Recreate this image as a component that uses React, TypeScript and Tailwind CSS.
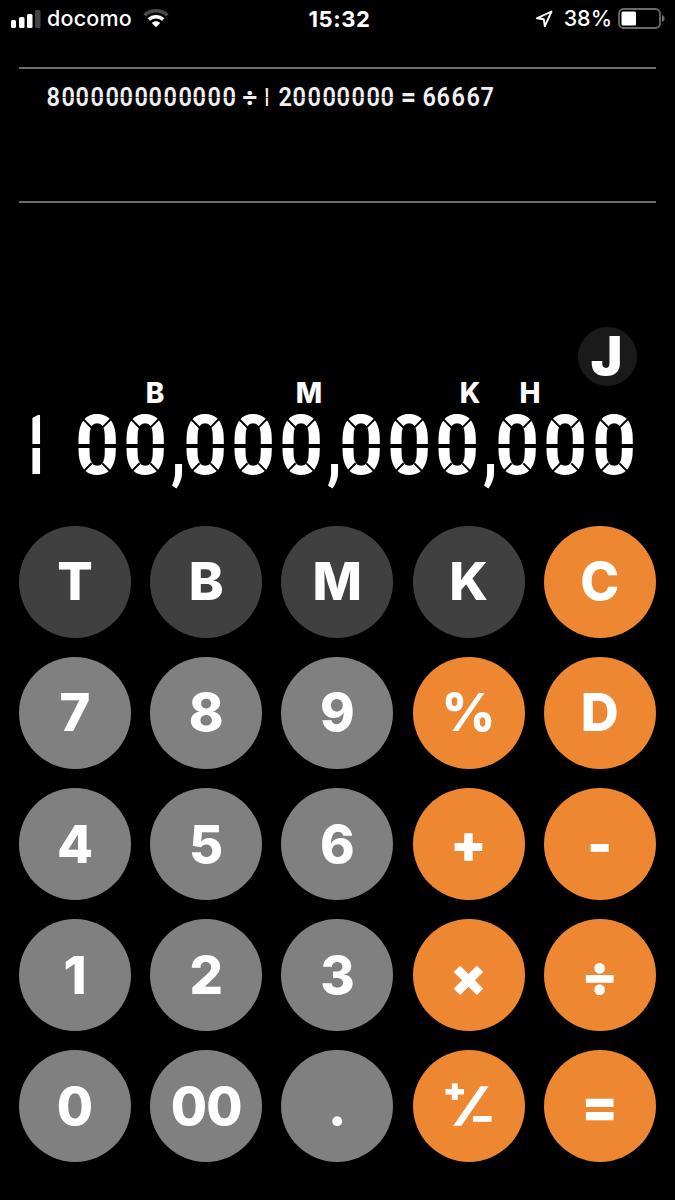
import React from 'react';
import clsx from 'clsx';

type Tone = 'dark' | 'gray' | 'orange';

interface Key {
  label: string;
  tone: Tone;
}

const KEYS: Key[] = [
  { label: 'T', tone: 'dark' },
  { label: 'B', tone: 'dark' },
  { label: 'M', tone: 'dark' },
  { label: 'K', tone: 'dark' },
  { label: 'C', tone: 'orange' },
  { label: '7', tone: 'gray' },
  { label: '8', tone: 'gray' },
  { label: '9', tone: 'gray' },
  { label: '%', tone: 'orange' },
  { label: 'D', tone: 'orange' },
  { label: '4', tone: 'gray' },
  { label: '5', tone: 'gray' },
  { label: '6', tone: 'gray' },
  { label: '+', tone: 'orange' },
  { label: '-', tone: 'orange' },
  { label: '1', tone: 'gray' },
  { label: '2', tone: 'gray' },
  { label: '3', tone: 'gray' },
  { label: '×', tone: 'orange' },
  { label: '÷', tone: 'orange' },
  { label: '0', tone: 'gray' },
  { label: '00', tone: 'gray' },
  { label: '.', tone: 'gray' },
  { label: '⁺⁄₋', tone: 'orange' },
  { label: '=', tone: 'orange' },
];

const TONES: Record<Tone, string> = {
  dark: 'bg-[#404040]',
  gray: 'bg-[#808080]',
  orange: 'bg-[#ee8732]',
};

const StatusBar: React.FC = () => (
  <header className="grid h-[37px] grid-cols-3 items-center pl-[11px] pr-[10px] text-[22px] font-medium leading-none">
    <div className="flex items-center">
      <svg width="30" height="18" viewBox="0 0 30 18" fill="#fff">
        <rect x="0" y="10" width="5" height="8" rx="1.5" />
        <rect x="8" y="7" width="5.5" height="11" rx="1.5" />
        <rect x="16" y="4" width="5.5" height="14" rx="1.5" />
        <rect x="24" y="0" width="5.5" height="18" rx="1.5" fill="#444" />
      </svg>
      <span className="ml-[6px] text-[21.5px] tracking-[0.2px]">docomo</span>
      <svg className="ml-[11px]" width="26" height="19" viewBox="0 0 26 19" fill="none" strokeWidth="3.4">
        <path d="M1.5 6.2C8 .3 18 .3 24.5 6.2" stroke="#4a4a4a" />
        <path d="M5.7 10.6C10 6.7 16 6.7 20.3 10.6" stroke="#fff" />
        <path d="M8.8 14C11.3 11.8 14.7 11.8 17.2 14L13 18.2Z" fill="#fff" />
      </svg>
    </div>
    <div className="pl-[3px] text-center font-bold tracking-[0.6px]">15:32</div>
    <div className="flex items-center justify-end">
      <svg width="18" height="18" viewBox="0 0 18 18" fill="none" stroke="#fff" strokeWidth="1.9" strokeLinejoin="round">
        <path d="M16.5 1.5L1.8 8.3L8.8 9.3L9.8 16.3Z" />
      </svg>
      <span className="ml-[11px] text-[21.5px]">38%</span>
      <svg className="ml-[6px]" width="47" height="21" viewBox="0 0 47 21">
        <rect x="1" y="1" width="41" height="19" rx="4.5" fill="none" stroke="#6b6b6b" strokeWidth="1.8" />
        <rect x="3.5" y="3.5" width="14.5" height="14" rx="1.5" fill="#fff" />
        <path d="M44 7C47.5 8 47.5 13 44 14Z" fill="#6b6b6b" />
      </svg>
    </div>
  </header>
);

interface LcdProps {
  large?: boolean;
}

// One LCD cell. Everything is in em so that both line sizes share it.
const LcdChar: React.FC<LcdProps & { char: string }> = ({ char, large }) => {
  if (char === ',') {
    return (
      <span className="w-[0.145em] text-center">
        <span className="-ml-[0.01em] inline-block scale-x-[0.7]">,</span>
      </span>
    );
  }
  if (!/\d/.test(char)) {
    return <span className="w-[1.05em] text-center font-black">{char}</span>;
  }
  const gap = <span className={clsx('absolute left-0 top-[0.34em] h-[0.048em] w-full', large ? 'bg-black' : 'bg-black/60')} />;
  if (char === '1') {
    return (
      <span className="relative w-[0.572em]">
        <span className="-ml-[0.085em] inline-block origin-left scale-x-[0.7] [clip-path:inset(0_0_0_0.262em)]">1</span>
        {gap}
      </span>
    );
  }
  return (
    <span className="relative w-[0.572em] text-center">
      <span className="inline-block scale-x-[0.92]">{char}</span>
      {char === '0' && gap}
      {/* corner gaps only show at the large size */}
      {char === '0' && large && (
        <>
          <span className="absolute left-[0.06em] top-[0.075em] h-[0.024em] w-[0.19em] rotate-45 bg-black" />
          <span className="absolute right-[0.06em] top-[0.075em] h-[0.024em] w-[0.19em] -rotate-45 bg-black" />
          <span className="absolute bottom-[0.075em] left-[0.06em] h-[0.024em] w-[0.19em] -rotate-45 bg-black" />
          <span className="absolute bottom-[0.075em] right-[0.06em] h-[0.024em] w-[0.19em] rotate-45 bg-black" />
        </>
      )}
    </span>
  );
};

const LcdText: React.FC<LcdProps & { text: string; className: string }> = ({ text, large, className }) => (
  <div className={clsx("flex font-['Roboto'] leading-[0.726em]", className)}>
    {text.split('').map((char, i) => (
      <LcdChar key={i} char={char} large={large} />
    ))}
  </div>
);

const Display: React.FC<{ value: string }> = ({ value }) => (
  <section className="h-[322.5px] pt-[124px]">
    <div className="flex justify-end pr-[38px]">
      <button className="flex size-[59px] items-center justify-center rounded-full bg-[#1a1a1a] pr-[2px] text-[53px] font-black leading-none">
        J
      </button>
    </div>
    <div className="flex h-[29px] items-start pl-[140px] text-center text-[28px] font-extrabold leading-[14px]">
      <span className="w-[30px]">B</span>
      <span className="ml-[124px] w-[30px]">M</span>
      <span className="ml-[131px] w-[30px]">K</span>
      <span className="ml-[30px] w-[30px]">H</span>
    </div>
    <LcdText large text={value} className="pl-[24.5px] text-[84px] font-bold" />
  </section>
);

const KeyLabel: React.FC<{ label: string }> = ({ label }) => {
  if (label === '⁺⁄₋') {
    return (
      <span className="flex">
        <span>⁺</span>
        <span className="-ml-[3px] [-webkit-text-stroke:1.5px_white]">⁄</span>
        <span className="-ml-[8px] -mt-[4px]">₋</span>
      </span>
    );
  }
  return <span className={clsx(label === '×' && 'pt-[5px]')}>{label}</span>;
};

const Keypad: React.FC = () => (
  <div className="grid grid-cols-[repeat(5,112px)] gap-[19.2px] pl-[19px]">
    {KEYS.map(({ label, tone }) => (
      <button
        key={label}
        className={clsx(
          'flex size-[112px] items-center justify-center rounded-full text-[52.5px] leading-none',
          /[+\-×÷=⁺]/.test(label) ? 'font-black' : 'font-extrabold',
          label === '00' && 'tracking-[-1px]',
          TONES[tone],
        )}
      >
        <KeyLabel label={label} />
      </button>
    ))}
  </div>
);

const App: React.FC = () => (
  <div className="h-[1200px] w-[675px] overflow-hidden bg-black font-['Inter',sans-serif] text-white">
    <StatusBar />
    <div className="mx-[19px] mt-[30px] h-[136px] border-y-2 border-[#6e6e6e]">
      <LcdText text="8000000000000÷120000000=66667" className="pl-[27px] pt-[19px] text-[25.6px] font-semibold text-[#f0f0f0]" />
    </div>
    <Display value="100,000,000,000" />
    <Keypad />
  </div>
);

export default App;
